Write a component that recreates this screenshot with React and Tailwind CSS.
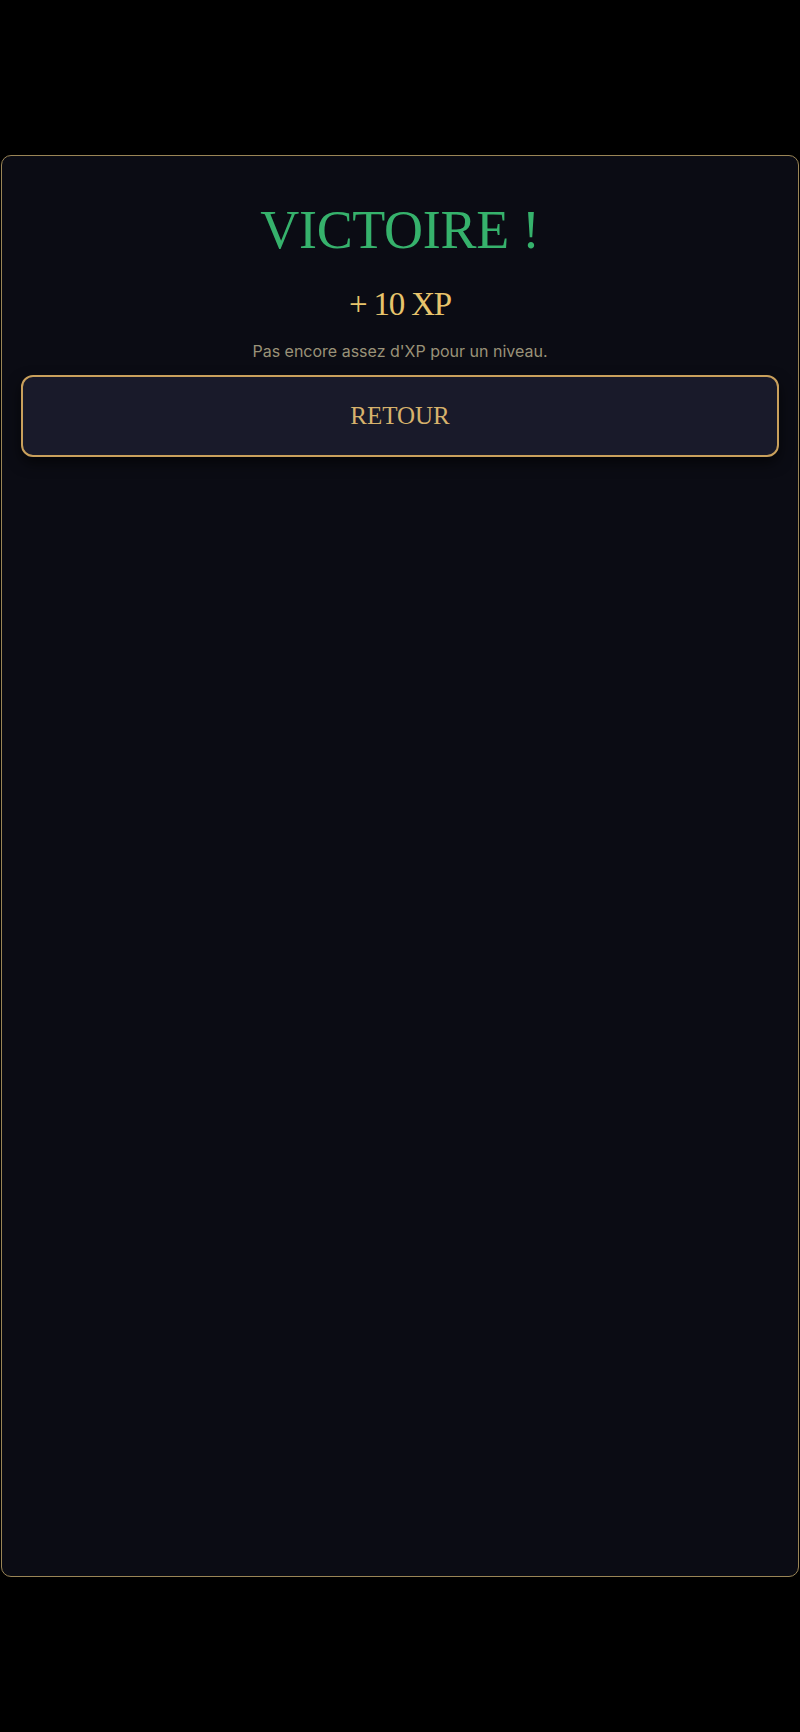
import React from "react";

export default function App() {
  return (
    <div className="min-h-screen w-full bg-black flex items-center">
      <div className="mx-[1px] h-[1422px] w-full rounded-[10px] border border-[#9a8556] bg-[#0b0c14] px-[19px] pt-[47px] flex flex-col">
        <h1 className="font-['Liberation_Serif',serif] text-center text-[54px] leading-[54px] text-[#36b26c] tracking-[-0.3px]">
          VICTOIRE !
        </h1>
        <div className="font-['Liberation_Serif',serif] mt-[31px] text-center text-[33px] leading-[33px] text-[#e8c46c] tracking-[-1.2px]">
          + 10 XP
        </div>
        <p className="font-['Inter','Liberation_Sans',sans-serif] mt-[23px] text-center text-[16px] leading-[15px] text-[#9a9278]">
          Pas encore assez d'XP pour un niveau.
        </p>
        <button className="font-['Liberation_Serif',serif] mt-[16px] h-[82px] w-full rounded-[12px] border-2 border-[#c9a05c] bg-[#191a2a] shadow-[0_6px_14px_rgba(0,0,0,0.6)] text-[25px] text-[#d6b26c] flex items-center justify-center">
          RETOUR
        </button>
      </div>
    </div>
  );
}
